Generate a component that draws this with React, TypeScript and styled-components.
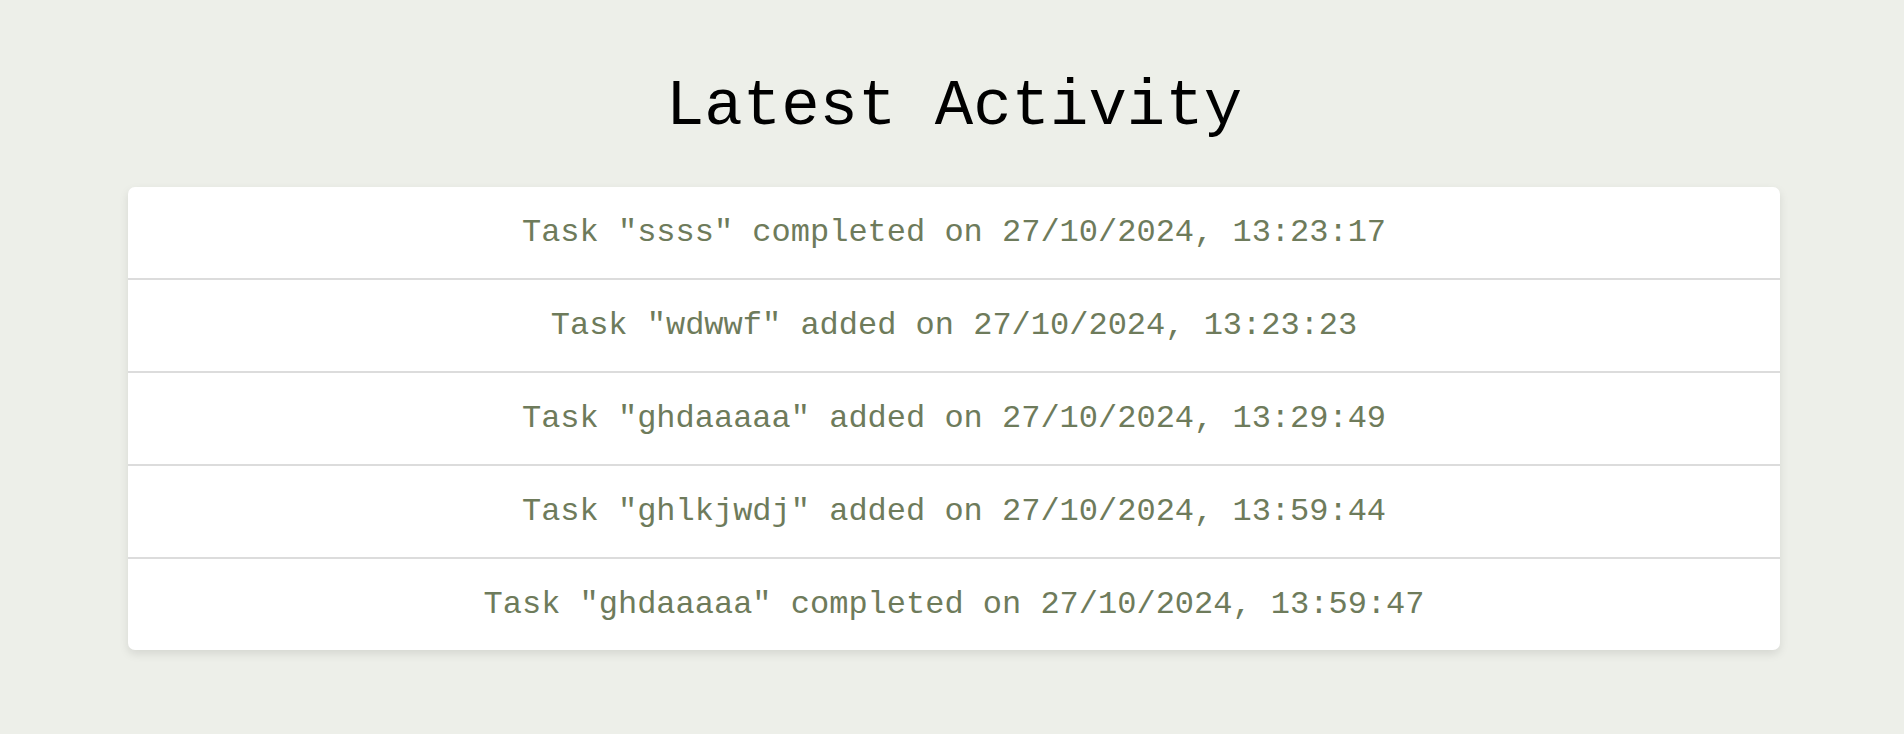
import React from "react";
import styled, { createGlobalStyle } from "styled-components";

const mono = `Courier, "Nimbus Mono PS", "Nimbus Mono L", FreeMono, "Courier New", monospace`;

const GlobalStyle = createGlobalStyle`
  html, body {
    margin: 0;
    padding: 0;
    background: #edefe9;
  }
  body {
    font-family: ${mono};
  }
`;

const Page = styled.main`
  min-height: 734px;
  box-sizing: border-box;
  padding: 71px 0 0 4px;
  display: flex;
  flex-direction: column;
  align-items: center;
`;

const Title = styled.h1`
  margin: 0 0 43px;
  font-family: ${mono};
  font-size: 64px;
  font-weight: 400;
  line-height: 73px;
  color: #000;
  text-align: center;
`;

const Card = styled.ul`
  list-style: none;
  margin: 0;
  padding: 0;
  width: 1652px;
  background: #ffffff;
  border-radius: 7px;
  box-shadow: 0 4px 10px rgba(0, 0, 0, 0.1);
  overflow: hidden;
`;

const Row = styled.li`
  padding: 27px 16px;
  font-family: ${mono};
  font-size: 32px;
  line-height: 37px;
  color: #6e7b5b;
  text-align: center;
  border-bottom: 2px solid #dcdcdc;
  &:last-child {
    border-bottom: none;
  }
`;

const activities = [
  'Task "ssss" completed on 27/10/2024, 13:23:17',
  'Task "wdwwf" added on 27/10/2024, 13:23:23',
  'Task "ghdaaaaa" added on 27/10/2024, 13:29:49',
  'Task "ghlkjwdj" added on 27/10/2024, 13:59:44',
  'Task "ghdaaaaa" completed on 27/10/2024, 13:59:47',
];

export default function App() {
  return (
    <>
      <GlobalStyle />
      <Page>
        <Title>Latest Activity</Title>
        <Card>
          {activities.map((a, i) => (
            <Row key={i}>{a}</Row>
          ))}
        </Card>
      </Page>
    </>
  );
}
